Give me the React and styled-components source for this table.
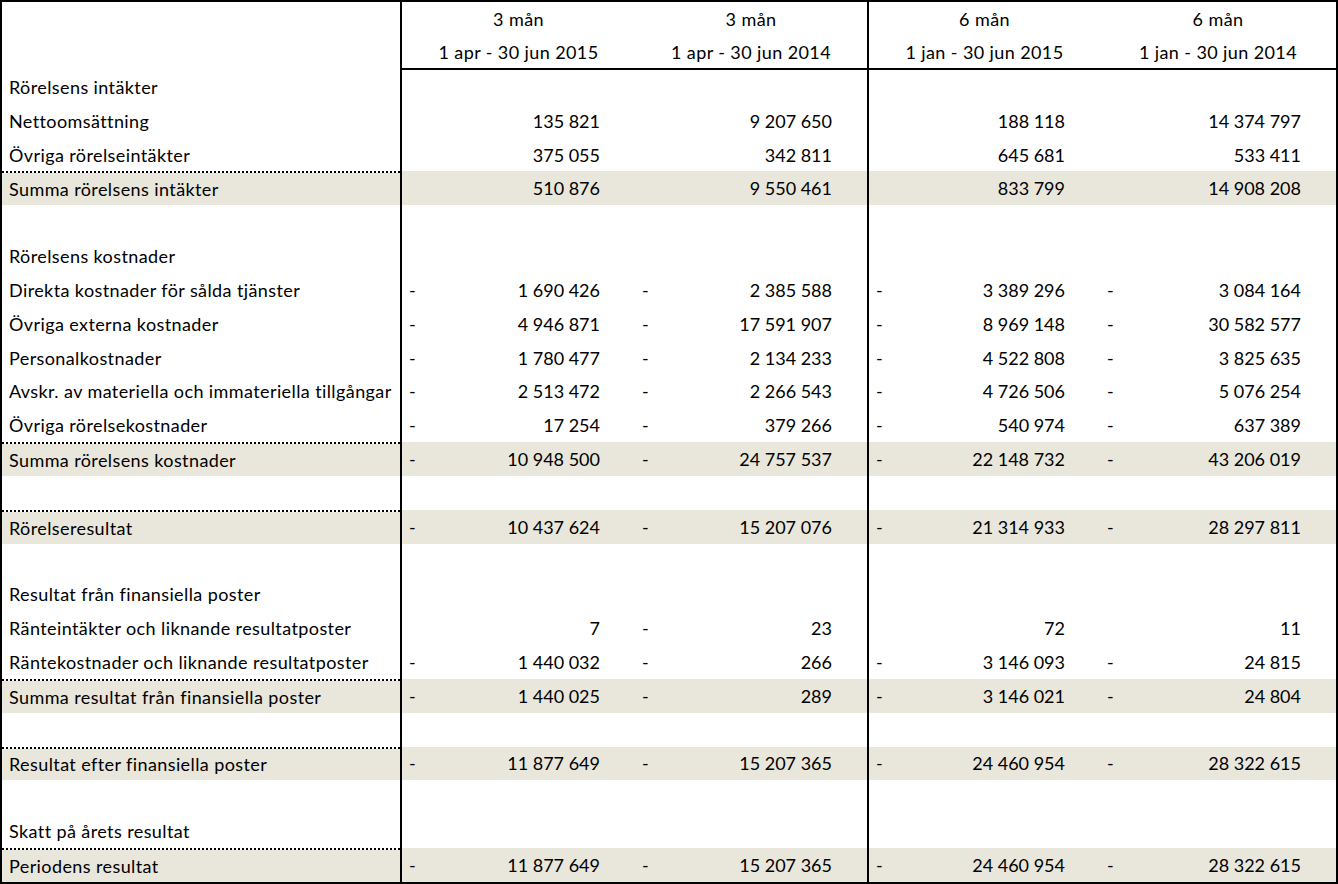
import React from "react";
import styled, { createGlobalStyle } from "styled-components";

const Global = createGlobalStyle`
  *, *::before, *::after { box-sizing: border-box; }
  html, body { margin: 0; padding: 0; background: #ffffff; }
  body { font-family: Lato, "Open Sans", "Liberation Sans", sans-serif; color: #000; }
`;

const COLS = "398px 235px 232px 233px 236px";
const BAND = "#e9e7dc";

const Table = styled.div`
  width: 1338px;
  height: 884px;
  border: 2px solid #000;
  display: flex;
  flex-direction: column;
  font-size: 18px;
  line-height: 1;
`;

const HeaderRow = styled.div`
  display: grid;
  grid-template-columns: ${COLS};
  height: 68px;
`;

const HeaderBlank = styled.div``;

const HeaderCell = styled.div`
  display: grid;
  grid-template-rows: 1fr 1fr;
  align-items: center;
  justify-items: center;
  border-bottom: 2px solid #000;
  border-left: ${(p) => (p.$divider ? "2px solid #000" : "none")};
  white-space: nowrap;
  letter-spacing: 0.4px;
`;

const Body = styled.div`
  flex: 1;
  display: flex;
  flex-direction: column;
`;

const Row = styled.div`
  flex: 1;
  display: grid;
  grid-template-columns: ${COLS};
  min-height: 0;
`;

const Label = styled.div`
  display: flex;
  align-items: center;
  padding: 0 0 0 7px;
  white-space: nowrap;
  letter-spacing: 0.4px;
  background: ${(p) => (p.$shaded ? BAND : "transparent")};
  background-clip: padding-box;
  border-top: ${(p) => (p.$dotted ? "2px dotted #000" : "none")};
`;

const Value = styled.div`
  display: flex;
  align-items: center;
  justify-content: space-between;
  padding: 0 35px 0 7px;
  white-space: nowrap;
  background: ${(p) => (p.$shaded ? BAND : "transparent")};
  border-left: ${(p) => (p.$divider ? "2px solid #000" : "none")};
`;

const Minus = styled.span``;
const Num = styled.span`
  margin-left: auto;
`;

const headers = [
  ["3 mån", "1 apr - 30 jun 2015"],
  ["3 mån", "1 apr - 30 jun 2014"],
  ["6 mån", "1 jan - 30 jun 2015"],
  ["6 mån", "1 jan - 30 jun 2014"],
];

const rows = [
  { label: "Rörelsens intäkter" },
  { label: "Nettoomsättning", v: ["135 821", "9 207 650", "188 118", "14 374 797"] },
  { label: "Övriga rörelseintäkter", v: ["375 055", "342 811", "645 681", "533 411"] },
  { label: "Summa rörelsens intäkter", sum: true, v: ["510 876", "9 550 461", "833 799", "14 908 208"] },
  { label: "" },
  { label: "Rörelsens kostnader" },
  { label: "Direkta kostnader för sålda tjänster", v: ["-1 690 426", "-2 385 588", "-3 389 296", "-3 084 164"] },
  { label: "Övriga externa kostnader", v: ["-4 946 871", "-17 591 907", "-8 969 148", "-30 582 577"] },
  { label: "Personalkostnader", v: ["-1 780 477", "-2 134 233", "-4 522 808", "-3 825 635"] },
  { label: "Avskr. av materiella och immateriella tillgångar", v: ["-2 513 472", "-2 266 543", "-4 726 506", "-5 076 254"] },
  { label: "Övriga rörelsekostnader", v: ["-17 254", "-379 266", "-540 974", "-637 389"] },
  { label: "Summa rörelsens kostnader", sum: true, v: ["-10 948 500", "-24 757 537", "-22 148 732", "-43 206 019"] },
  { label: "" },
  { label: "Rörelseresultat", sum: true, v: ["-10 437 624", "-15 207 076", "-21 314 933", "-28 297 811"] },
  { label: "" },
  { label: "Resultat från finansiella poster" },
  { label: "Ränteintäkter och liknande resultatposter", v: ["7", "-23", "72", "11"] },
  { label: "Räntekostnader och liknande resultatposter", v: ["-1 440 032", "-266", "-3 146 093", "-24 815"] },
  { label: "Summa resultat från finansiella poster", sum: true, v: ["-1 440 025", "-289", "-3 146 021", "-24 804"] },
  { label: "" },
  { label: "Resultat efter finansiella poster", sum: true, v: ["-11 877 649", "-15 207 365", "-24 460 954", "-28 322 615"] },
  { label: "" },
  { label: "Skatt på årets resultat" },
  { label: "Periodens resultat", sum: true, v: ["-11 877 649", "-15 207 365", "-24 460 954", "-28 322 615"] },
];

function Cell({ value, shaded, divider }) {
  const neg = value && value.startsWith("-");
  const num = value ? (neg ? value.slice(1) : value) : "";
  return (
    <Value $shaded={shaded} $divider={divider}>
      {neg && <Minus>-</Minus>}
      <Num>{num}</Num>
    </Value>
  );
}

export default function App() {
  return (
    <>
      <Global />
      <Table>
        <HeaderRow>
          <HeaderBlank />
          {headers.map((h, i) => (
            <HeaderCell key={i} $divider={i === 0 || i === 2}>
              <span>{h[0]}</span>
              <span>{h[1]}</span>
            </HeaderCell>
          ))}
        </HeaderRow>
        <Body>
          {rows.map((r, ri) => (
            <Row key={ri}>
              <Label $shaded={r.sum} $dotted={r.sum}>
                {r.label}
              </Label>
              {[0, 1, 2, 3].map((ci) => (
                <Cell
                  key={ci}
                  value={r.v ? r.v[ci] : ""}
                  shaded={r.sum}
                  divider={ci === 0 || ci === 2}
                />
              ))}
            </Row>
          ))}
        </Body>
      </Table>
    </>
  );
}
